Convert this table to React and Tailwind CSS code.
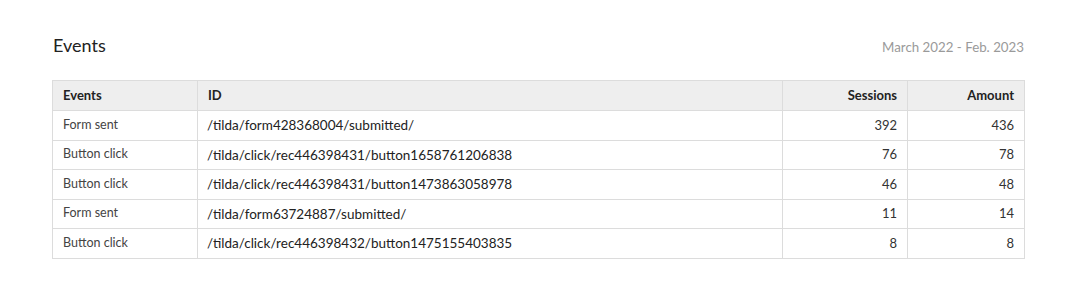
import React from "react";

const rows = [
  ["Form sent", "/tilda/form428368004/submitted/", "392", "436"],
  ["Button click", "/tilda/click/rec446398431/button1658761206838", "76", "78"],
  ["Button click", "/tilda/click/rec446398431/button1473863058978", "46", "48"],
  ["Form sent", "/tilda/form63724887/submitted/", "11", "14"],
  ["Button click", "/tilda/click/rec446398432/button1475155403835", "8", "8"],
];

export default function App() {
  return (
    <div
      className="w-[1084px] h-[288px] bg-white pl-[52px] pr-[60px] pt-[32px]"
      style={{ fontFamily: "Lato, 'Open Sans', sans-serif" }}
    >
      <div className="flex items-end justify-between h-[26px]">
        <h1 className="text-[18px] leading-[26px] text-[#222] ml-[1px]">Events</h1>
        <div className="text-[13.3px] leading-[20px] text-[#9a9a9a] mb-[1px]">
          March 2022 - Feb. 2023
        </div>
      </div>
      <table className="mt-[22px] w-[972px] border-collapse table-fixed">
        <colgroup>
          <col className="w-[145px]" />
          <col className="w-[585px]" />
          <col className="w-[125px]" />
          <col className="w-[117px]" />
        </colgroup>
        <thead>
          <tr className="bg-[#eeeeee] h-[30px]">
            <th className="border border-[#dcdcdc] px-[10px] text-left text-[13px] font-bold text-[#222]">Events</th>
            <th className="border border-[#dcdcdc] px-[10px] text-left text-[13px] font-bold text-[#222]">ID</th>
            <th className="border border-[#dcdcdc] px-[10px] text-right text-[13px] font-bold text-[#222]">Sessions</th>
            <th className="border border-[#dcdcdc] px-[10px] text-right text-[13px] font-bold text-[#222]">Amount</th>
          </tr>
        </thead>
        <tbody>
          {rows.map((r, i) => (
            <tr key={i} className="h-[29.5px]">
              <td className="border border-[#dcdcdc] px-[10px] text-[12.5px] text-[#444]">{r[0]}</td>
              <td className="border border-[#dcdcdc] px-[9px] text-[13.5px] text-[#222]">{r[1]}</td>
              <td className="border border-[#dcdcdc] px-[10px] text-right text-[13px] text-[#333]">{r[2]}</td>
              <td className="border border-[#dcdcdc] px-[10px] text-right text-[13px] text-[#333]">{r[3]}</td>
            </tr>
          ))}
        </tbody>
      </table>
    </div>
  );
}
